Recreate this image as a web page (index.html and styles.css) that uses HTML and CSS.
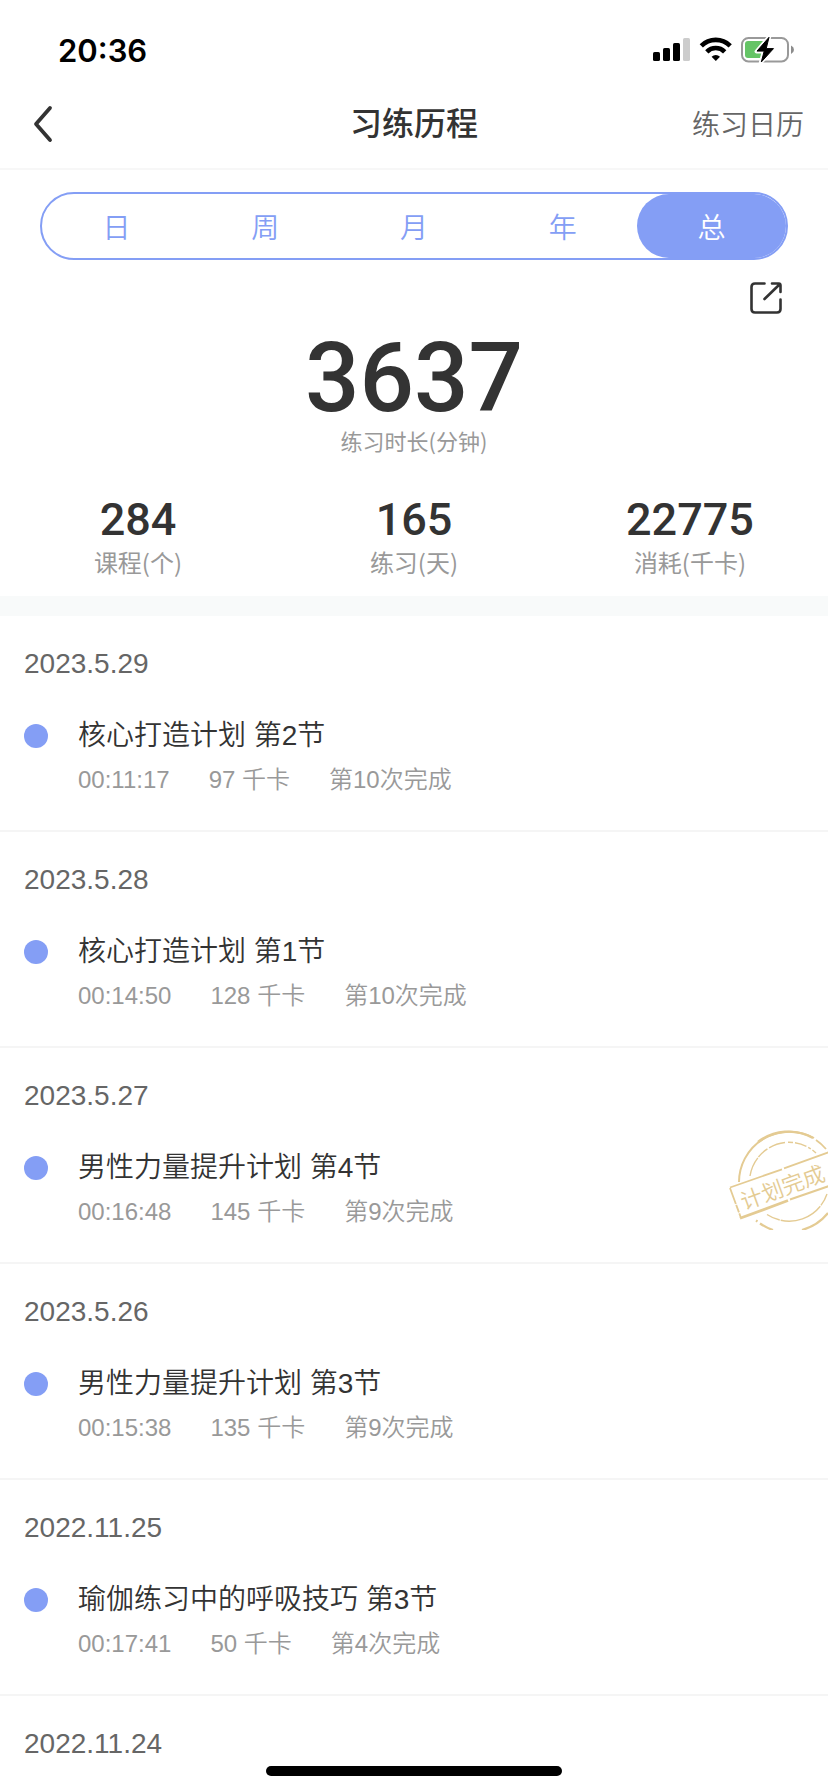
FILE: index.html
```html
<!DOCTYPE html>
<html lang="zh-CN">
<head>
<meta charset="utf-8">
<meta name="viewport" content="width=device-width, initial-scale=1">
<title>习练历程</title>
<link rel="stylesheet" href="styles.css">
</head>
<body>
<div class="status">
  <span class="status-time">20:36</span>
  <svg class="status-icons" width="142" height="28" viewBox="0 0 142 28" aria-hidden="true">
    <rect x="0" y="16" width="7" height="9" rx="1.6"/>
    <rect x="10" y="12" width="7" height="13" rx="1.6"/>
    <rect x="20" y="7" width="7" height="18" rx="1.6"/>
    <rect x="30" y="2" width="7" height="23" rx="1.6" fill="#ccc"/>
    <g fill="none" stroke="#000" stroke-width="4.6">
      <path d="M48.300 9.800A20.500 20.500 0 0 1 77.200 9.800"/>
      <path d="M53.800 15.800A12.600 12.600 0 0 1 71.700 15.800"/>
    </g>
    <path d="M58.600 20.700A6.200 6.200 0 0 1 67 20.700L62.800 25Z"/>
    <rect x="89" y="2" width="46" height="23.400" rx="6.500" fill="none" stroke="#999" stroke-width="2"/>
    <path d="M138 9.500q3 1.400 3 4.200t-3 4.200z" fill="#8c8c8c"/>
    <path d="M95 5h16v17H95q-3 0-3-3V8q0-3 3-3z" fill="#65c466"/>
    <path d="M116.200 .8L103.600 15.500H110.800L107.800 26.500L121 12.200H113.600Z" stroke="#fff" stroke-width="4" stroke-linejoin="round"/>
    <path d="M116 1.300L104 15.100H111.200L108.300 26L120.500 12.600H113.200Z" stroke="#000" stroke-linejoin="round"/>
  </svg>
</div>

<header class="nav">
  <button class="nav-back" type="button" aria-label="返回">
    <svg width="20" height="38" viewBox="0 0 20 38" fill="none" stroke="#333" stroke-width="3.800" stroke-linecap="round" stroke-linejoin="round" aria-hidden="true"><path d="M17 3L3 19L17 35"/></svg>
  </button>
  <h1 class="nav-title">习练历程</h1>
  <a class="nav-link" href="#calendar">练习日历</a>
</header>

<main>
  <section class="summary">
    <nav class="tabs" aria-label="统计周期">
      <button class="tab" type="button">日</button>
      <button class="tab" type="button">周</button>
      <button class="tab" type="button">月</button>
      <button class="tab" type="button">年</button>
      <button class="tab tab-active" type="button" aria-current="true">总</button>
    </nav>
    <button class="share" type="button" aria-label="分享">
      <svg width="32" height="32" viewBox="0 0 32 32" fill="none" stroke="#333" stroke-width="2.600" stroke-linecap="round" stroke-linejoin="round" aria-hidden="true"><path d="M14.500 1.500H5Q1.500 1.500 1.500 5V27Q1.500 30.500 5 30.500H27Q30.500 30.500 30.500 27V17.500M22 1.500H28.500Q30.500 1.500 30.500 3.500V10M30 2L14.500 17"/></svg>
    </button>
    <div class="total">
      <strong class="total-value">3637</strong>
      <span class="total-label">练习时长(分钟)</span>
    </div>
    <div class="stats">
      <div class="stat"><strong class="stat-value">284</strong><span class="stat-label">课程(个)</span></div>
      <div class="stat"><strong class="stat-value">165</strong><span class="stat-label">练习(天)</span></div>
      <div class="stat"><strong class="stat-value">22775</strong><span class="stat-label">消耗(千卡)</span></div>
    </div>
  </section>

  <section class="history">
    <article class="day">
      <time class="date">2023.5.29</time>
      <h2 class="course">核心打造计划 第2节</h2>
      <p class="meta"><span>00:11:17</span><span>97 千卡</span><span>第10次完成</span></p>
    </article>
    <article class="day">
      <time class="date">2023.5.28</time>
      <h2 class="course">核心打造计划 第1节</h2>
      <p class="meta"><span>00:14:50</span><span>128 千卡</span><span>第10次完成</span></p>
    </article>
    <article class="day">
      <time class="date">2023.5.27</time>
      <h2 class="course">男性力量提升计划 第4节</h2>
      <p class="meta"><span>00:16:48</span><span>145 千卡</span><span>第9次完成</span></p>
      <svg class="stamp" width="100" height="100" viewBox="0 0 100 100">
        <g fill="none" stroke="#e4cb93">
          <path d="M11 52A50.500 50.500 0 0 1 86 8" stroke-width="2"/>
          <path d="M30 12A50 50 0 0 1 85 8" stroke-width="2.400"/>
          <path d="M88 10A50 50 0 0 1 98 19" stroke-width="1.800"/>
          <path d="M22 46A40 40 0 0 1 57 12.500" stroke-width="1.400" stroke-dasharray="20 1 12 2 30"/>
          <path d="M60 12.300A40 40 0 0 1 88 23" stroke-width="1.400" stroke-dasharray="5 2 12 2 3 2"/>
          <path d="M39 84.500A40 40 0 0 0 99 64" stroke-width="1.400" stroke-dasharray="14 1 44 1"/>
          <path d="M28 90.500L29.500 91.500M32 93.500A50.500 50.500 0 0 0 45 100M74 100A50.500 50.500 0 0 0 100 83" stroke-width="2.200"/>
          <path d="M2 57.500L54 39.300M56 38.400L104 21" stroke-width="1.800"/>
          <path d="M2 58L13 88" stroke-width="1.800" stroke-dasharray="17 1 8 1"/>
          <path d="M12 88.300L60 70.500" stroke-width="2.800"/>
          <path d="M62 69.500L104 55" stroke-width="2"/>
        </g>
        <text class="stamp-text" transform="translate(16 80) rotate(-20)">计划完成</text>
      </svg>
    </article>
    <article class="day">
      <time class="date">2023.5.26</time>
      <h2 class="course">男性力量提升计划 第3节</h2>
      <p class="meta"><span>00:15:38</span><span>135 千卡</span><span>第9次完成</span></p>
    </article>
    <article class="day">
      <time class="date">2022.11.25</time>
      <h2 class="course">瑜伽练习中的呼吸技巧 第3节</h2>
      <p class="meta"><span>00:17:41</span><span>50 千卡</span><span>第4次完成</span></p>
    </article>
    <article class="day day-last">
      <time class="date">2022.11.24</time>
    </article>
  </section>
</main>
<div class="home-bar"></div>
</body>
</html>
```
FILE: styles.css
```css
* {
  box-sizing: border-box;
}

body {
  margin: 0;
  background: #fff;
  color: #333;
  font-family: "Liberation Sans", "Noto Sans CJK SC", sans-serif;
  font-size: 28px;
  font-weight: 350;
}

button {
  padding: 0;
  border: 0;
  background: none;
  color: inherit;
  font: inherit;
  cursor: pointer;
}

svg {
  display: block;
}

.status {
  display: flex;
  align-items: center;
  justify-content: space-between;
  height: 80px;
  padding: 20px 33px 0 58px;
}

.status-time {
  color: #000;
  font-family: Inter, sans-serif;
  font-size: 31px;
  font-weight: 600;
}

.nav {
  display: grid;
  grid-template-columns: 1fr auto 1fr;
  align-items: center;
  height: 90px;
  padding: 0 24px;
  border-bottom: 2px solid #f7f7f7;
}

.nav-back {
  justify-self: start;
  padding: 0 9px;
}

.nav-title {
  margin: 0;
  font-size: 32px;
  font-weight: 500;
  line-height: 40px;
}

.nav-link {
  justify-self: end;
  padding-top: 4px;
  color: #666;
  line-height: 40px;
  text-decoration: none;
}

.summary {
  display: flex;
  flex-direction: column;
  padding: 22px 0 18px;
  border-bottom: 20px solid #f8fafa;
}

.tabs {
  display: flex;
  height: 68px;
  margin: 0 40px;
  border: 2px solid #849ef5;
  border-radius: 34px;
}

.tab {
  flex: 1;
  border-radius: 32px;
  color: #849ef5;
}

.tab-active {
  background: #849ef5;
  color: #fff;
}

.share {
  align-self: flex-end;
  margin: 22px 46px 24px 0;
}

.total,
.stat {
  display: flex;
  flex-direction: column;
  align-items: center;
}

.total {
  gap: 6px;
}

.total-value,
.stat-value {
  font-family: Roboto, sans-serif;
  font-weight: 500;
}

.total-value {
  font-size: 96px;
  line-height: 80px;
}

.total-label,
.stat-label {
  color: #999;
  font-family: "Noto Sans CJK SC", sans-serif;
  font-weight: 400;
  line-height: 32px;
}

.total-label {
  font-size: 22px;
}

.stats {
  display: grid;
  grid-template-columns: repeat(3, 1fr);
  padding-top: 44px;
}

.stat {
  gap: 6px;
}

.stat-value {
  font-size: 45px;
  line-height: 40px;
}

.stat-label {
  font-size: 24px;
}

.day {
  position: relative;
  padding: 28px 24px 34px;
  border-bottom: 2px solid #f5f5f5;
}

.day-last {
  padding-bottom: 28px;
  border-bottom: 0;
}

.date {
  display: block;
  color: #666;
  line-height: 40px;
}

.course {
  display: flex;
  align-items: center;
  gap: 30px;
  margin: 32px 0 8px;
  font-size: 28px;
  font-weight: 350;
  line-height: 40px;
}

.course::before {
  width: 24px;
  height: 24px;
  border-radius: 50%;
  background: #849ef5;
  content: "";
}

.meta {
  display: flex;
  gap: 39px;
  margin: 0;
  padding-left: 54px;
  color: #999;
  font-size: 24px;
  line-height: 32px;
}

.stamp {
  position: absolute;
  top: 82px;
  right: 0;
}

.stamp-text {
  fill: #e4cb93;
  font-size: 22px;
}

.home-bar {
  position: fixed;
  bottom: 16px;
  left: 50%;
  width: 296px;
  height: 10px;
  border-radius: 5px;
  background: #000;
  transform: translateX(-50%);
}
```
